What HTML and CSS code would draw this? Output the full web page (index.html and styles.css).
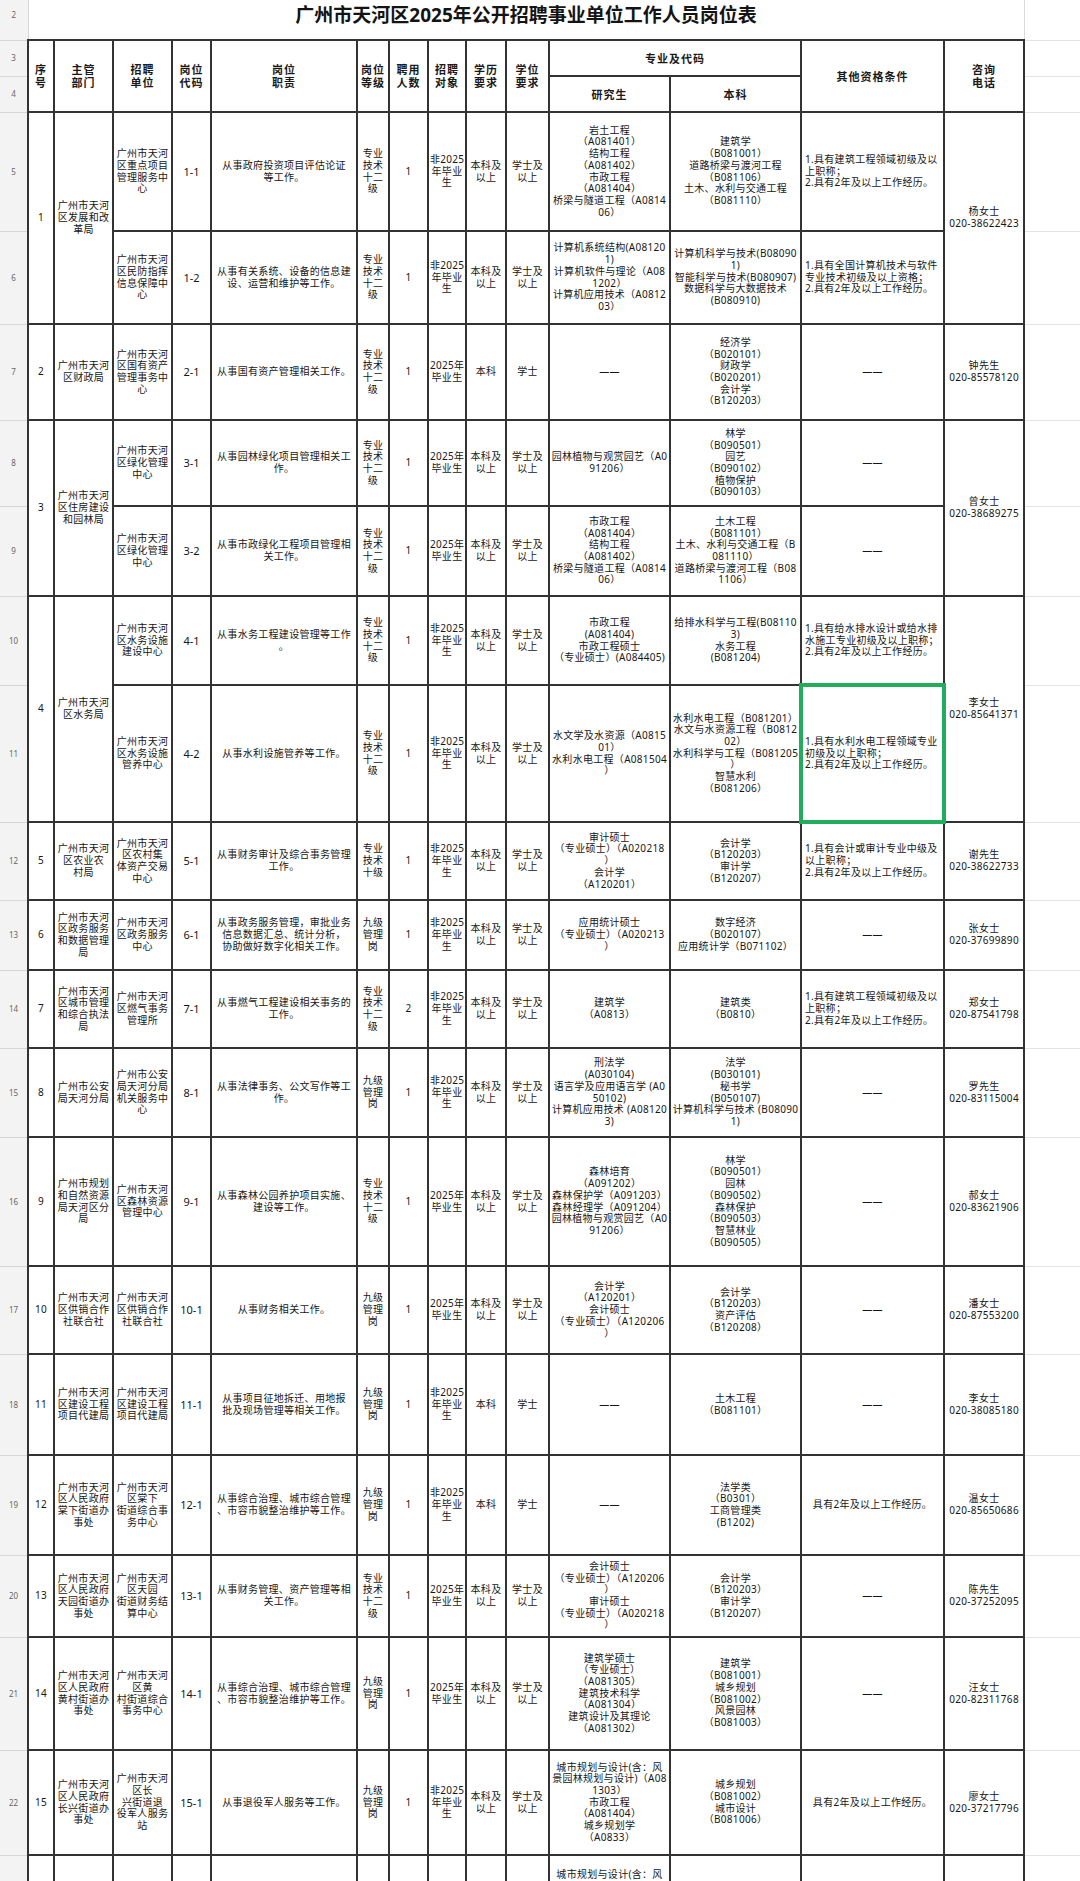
FILE: index.html
```html
<!DOCTYPE html>
<html lang="zh-CN">
<head>
<meta charset="utf-8">
<title>广州市天河区2025年公开招聘事业单位工作人员岗位表</title>
<link rel="stylesheet" href="styles.css">
</head>
<body>
<div class="page">
<table class="sheet">
<colgroup>
<col class="c-gut"><col class="c-no"><col class="c-dept"><col class="c-unit"><col class="c-code"><col class="c-duty"><col class="c-level"><col class="c-num"><col class="c-target"><col class="c-edu"><col class="c-deg"><col class="c-grad"><col class="c-ug"><col class="c-other"><col class="c-tel"><col class="c-blank">
</colgroup>
<tbody>
<tr class="r2"><td class="g g2">2</td><td class="title" colspan="14">广州市天河区2025年公开招聘事业单位工作人员岗位表</td><td class="x"></td></tr>

<tr class="r3"><td class="g">3</td>
<td class="h" rowspan="2">序<br>号</td>
<td class="h" rowspan="2">主管<br>部门</td>
<td class="h" rowspan="2">招聘<br>单位</td>
<td class="h" rowspan="2">岗位<br>代码</td>
<td class="h" rowspan="2">岗位<br>职责</td>
<td class="h" rowspan="2">岗位<br>等级</td>
<td class="h" rowspan="2">聘用<br>人数</td>
<td class="h" rowspan="2">招聘<br>对象</td>
<td class="h" rowspan="2">学历<br>要求</td>
<td class="h" rowspan="2">学位<br>要求</td>
<td class="h" colspan="2">专业及代码</td>
<td class="h" rowspan="2">其他资格条件</td>
<td class="h" rowspan="2">咨询<br>电话</td>
<td class="x"></td></tr>
<tr class="r4"><td class="g">4</td><td class="h">研究生</td><td class="h">本科</td><td class="x"></td></tr>

<tr class="r5"><td class="g">5</td>
<td class="no" rowspan="2">1</td>
<td rowspan="2">广州市天河<br>区发展和改<br>革局</td>
<td>广州市天河<br>区重点项目<br>管理服务中<br>心</td>
<td class="code">1-1</td>
<td>从事政府投资项目评估论证<br>等工作。</td>
<td>专业<br>技术<br>十二<br>级</td>
<td>1</td>
<td>非2025<br>年毕业<br>生</td>
<td>本科及<br>以上</td>
<td>学士及<br>以上</td>
<td>岩土工程<br>（A081401）<br>结构工程<br>（A081402）<br>市政工程<br>（A081404）<br>桥梁与隧道工程（A0814<br>06）</td>
<td>建筑学<br>（B081001）<br>道路桥梁与渡河工程<br>（B081106）<br>土木、水利与交通工程<br>（B081110）</td>
<td class="l">1.具有建筑工程领域初级及以<br>上职称；<br>2.具有2年及以上工作经历。</td>
<td rowspan="2">杨女士<br>020-38622423</td>
<td class="x"></td></tr>

<tr class="r6"><td class="g">6</td>
<td>广州市天河<br>区民防指挥<br>信息保障中<br>心</td>
<td class="code">1-2</td>
<td>从事有关系统、设备的信息建<br>设、运营和维护等工作。</td>
<td>专业<br>技术<br>十二<br>级</td>
<td>1</td>
<td>非2025<br>年毕业<br>生</td>
<td>本科及<br>以上</td>
<td>学士及<br>以上</td>
<td>计算机系统结构(A08120<br>1)<br>计算机软件与理论（A08<br>1202）<br>计算机应用技术（A0812<br>03）</td>
<td>计算机科学与技术(B08090<br>1)<br>智能科学与技术(B080907)<br>数据科学与大数据技术<br>(B080910)</td>
<td class="l">1.具有全国计算机技术与软件<br>专业技术初级及以上资格；<br>2.具有2年及以上工作经历。</td>
<td class="x"></td></tr>

<tr class="r7"><td class="g">7</td>
<td class="no">2</td>
<td>广州市天河<br>区财政局</td>
<td>广州市天河<br>区国有资产<br>管理事务中<br>心</td>
<td class="code">2-1</td>
<td>从事国有资产管理相关工作。</td>
<td>专业<br>技术<br>十二<br>级</td>
<td>1</td>
<td>2025年<br>毕业生</td>
<td>本科</td>
<td>学士</td>
<td>——</td>
<td>经济学<br>（B020101）<br>财政学<br>（B020201）<br>会计学<br>（B120203）</td>
<td>——</td>
<td>钟先生<br>020-85578120</td>
<td class="x"></td></tr>

<tr class="r8"><td class="g">8</td>
<td class="no" rowspan="2">3</td>
<td rowspan="2">广州市天河<br>区住房建设<br>和园林局</td>
<td>广州市天河<br>区绿化管理<br>中心</td>
<td class="code">3-1</td>
<td>从事园林绿化项目管理相关工<br>作。</td>
<td>专业<br>技术<br>十二<br>级</td>
<td>1</td>
<td>2025年<br>毕业生</td>
<td>本科及<br>以上</td>
<td>学士及<br>以上</td>
<td>园林植物与观赏园艺（A0<br>91206）</td>
<td>林学<br>（B090501）<br>园艺<br>（B090102）<br>植物保护<br>（B090103）</td>
<td>——</td>
<td rowspan="2">曾女士<br>020-38689275</td>
<td class="x"></td></tr>

<tr class="r9"><td class="g">9</td>
<td>广州市天河<br>区绿化管理<br>中心</td>
<td class="code">3-2</td>
<td>从事市政绿化工程项目管理相<br>关工作。</td>
<td>专业<br>技术<br>十二<br>级</td>
<td>1</td>
<td>2025年<br>毕业生</td>
<td>本科及<br>以上</td>
<td>学士及<br>以上</td>
<td>市政工程<br>（A081404）<br>结构工程<br>（A081402）<br>桥梁与隧道工程（A0814<br>06）</td>
<td>土木工程<br>（B081101）<br>土木、水利与交通工程（B<br>081110）<br>道路桥梁与渡河工程（B08<br>1106）</td>
<td>——</td>
<td class="x"></td></tr>

<tr class="r10"><td class="g">10</td>
<td class="no" rowspan="2">4</td>
<td rowspan="2">广州市天河<br>区水务局</td>
<td>广州市天河<br>区水务设施<br>建设中心</td>
<td class="code">4-1</td>
<td>从事水务工程建设管理等工作<br>。</td>
<td>专业<br>技术<br>十二<br>级</td>
<td>1</td>
<td>非2025<br>年毕业<br>生</td>
<td>本科及<br>以上</td>
<td>学士及<br>以上</td>
<td>市政工程<br>(A081404)<br>市政工程硕士<br>（专业硕士）(A084405)</td>
<td>给排水科学与工程(B08110<br>3)<br>水务工程<br>(B081204)</td>
<td class="l">1.具有给水排水设计或给水排<br>水施工专业初级及以上职称；<br>2.具有2年及以上工作经历。</td>
<td rowspan="2">李女士<br>020-85641371</td>
<td class="x"></td></tr>

<tr class="r11"><td class="g">11</td>
<td>广州市天河<br>区水务设施<br>管养中心</td>
<td class="code">4-2</td>
<td>从事水利设施管养等工作。</td>
<td>专业<br>技术<br>十二<br>级</td>
<td>1</td>
<td>非2025<br>年毕业<br>生</td>
<td>本科及<br>以上</td>
<td>学士及<br>以上</td>
<td>水文学及水资源（A0815<br>01）<br>水利水电工程（A081504<br>）</td>
<td>水利水电工程（B081201）<br>水文与水资源工程（B0812<br>02）<br>水利科学与工程（B081205<br>）<br>智慧水利<br>（B081206）</td>
<td class="l sel">1.具有水利水电工程领域专业<br>初级及以上职称；<br>2.具有2年及以上工作经历。</td>
<td class="x"></td></tr>

<tr class="r12"><td class="g">12</td>
<td class="no">5</td>
<td>广州市天河<br>区农业农<br>村局</td>
<td>广州市天河<br>区农村集<br>体资产交易<br>中心</td>
<td class="code">5-1</td>
<td>从事财务审计及综合事务管理<br>工作。</td>
<td>专业<br>技术<br>十级</td>
<td>1</td>
<td>非2025<br>年毕业<br>生</td>
<td>本科及<br>以上</td>
<td>学士及<br>以上</td>
<td>审计硕士<br>（专业硕士）（A020218<br>）<br>会计学<br>（A120201）</td>
<td>会计学<br>（B120203）<br>审计学<br>（B120207）</td>
<td class="l">1.具有会计或审计专业中级及<br>以上职称；<br>2.具有2年及以上工作经历。</td>
<td>谢先生<br>020-38622733</td>
<td class="x"></td></tr>

<tr class="r13"><td class="g">13</td>
<td class="no">6</td>
<td>广州市天河<br>区政务服务<br>和数据管理<br>局</td>
<td>广州市天河<br>区政务服务<br>中心</td>
<td class="code">6-1</td>
<td>从事政务服务管理，审批业务<br>信息数据汇总、统计分析，<br>协助做好数字化相关工作。</td>
<td>九级<br>管理<br>岗</td>
<td>1</td>
<td>非2025<br>年毕业<br>生</td>
<td>本科及<br>以上</td>
<td>学士及<br>以上</td>
<td>应用统计硕士<br>（专业硕士）（A020213<br>）</td>
<td>数字经济<br>（B020107）<br>应用统计学（B071102）</td>
<td>——</td>
<td>张女士<br>020-37699890</td>
<td class="x"></td></tr>

<tr class="r14"><td class="g">14</td>
<td class="no">7</td>
<td>广州市天河<br>区城市管理<br>和综合执法<br>局</td>
<td>广州市天河<br>区燃气事务<br>管理所</td>
<td class="code">7-1</td>
<td>从事燃气工程建设相关事务的<br>工作。</td>
<td>专业<br>技术<br>十二<br>级</td>
<td>2</td>
<td>非2025<br>年毕业<br>生</td>
<td>本科及<br>以上</td>
<td>学士及<br>以上</td>
<td>建筑学<br>（A0813）</td>
<td>建筑类<br>（B0810）</td>
<td class="l">1.具有建筑工程领域初级及以<br>上职称；<br>2.具有2年及以上工作经历。</td>
<td>郑女士<br>020-87541798</td>
<td class="x"></td></tr>

<tr class="r15"><td class="g">15</td>
<td class="no">8</td>
<td>广州市公安<br>局天河分局</td>
<td>广州市公安<br>局天河分局<br>机关服务中<br>心</td>
<td class="code">8-1</td>
<td>从事法律事务、公文写作等工<br>作。</td>
<td>九级<br>管理<br>岗</td>
<td>1</td>
<td>非2025<br>年毕业<br>生</td>
<td>本科及<br>以上</td>
<td>学士及<br>以上</td>
<td>刑法学<br>(A030104)<br>语言学及应用语言学 (A0<br>50102)<br>计算机应用技术 (A08120<br>3)</td>
<td>法学<br>(B030101)<br>秘书学<br>(B050107)<br>计算机科学与技术 (B08090<br>1)</td>
<td>——</td>
<td>罗先生<br>020-83115004</td>
<td class="x"></td></tr>

<tr class="r16"><td class="g">16</td>
<td class="no">9</td>
<td>广州市规划<br>和自然资源<br>局天河区分<br>局</td>
<td>广州市天河<br>区森林资源<br>管理中心</td>
<td class="code">9-1</td>
<td>从事森林公园养护项目实施、<br>建设等工作。</td>
<td>专业<br>技术<br>十二<br>级</td>
<td>1</td>
<td>2025年<br>毕业生</td>
<td>本科及<br>以上</td>
<td>学士及<br>以上</td>
<td>森林培育<br>（A091202）<br>森林保护学（A091203）<br>森林经理学（A091204）<br>园林植物与观赏园艺（A0<br>91206）</td>
<td>林学<br>（B090501）<br>园林<br>（B090502）<br>森林保护<br>（B090503）<br>智慧林业<br>（B090505）</td>
<td>——</td>
<td>郝女士<br>020-83621906</td>
<td class="x"></td></tr>

<tr class="r17"><td class="g">17</td>
<td class="no">10</td>
<td>广州市天河<br>区供销合作<br>社联合社</td>
<td>广州市天河<br>区供销合作<br>社联合社</td>
<td class="code">10-1</td>
<td>从事财务相关工作。</td>
<td>九级<br>管理<br>岗</td>
<td>1</td>
<td>2025年<br>毕业生</td>
<td>本科及<br>以上</td>
<td>学士及<br>以上</td>
<td>会计学<br>（A120201）<br>会计硕士<br>（专业硕士）（A120206<br>）</td>
<td>会计学<br>（B120203）<br>资产评估<br>（B120208）</td>
<td>——</td>
<td>潘女士<br>020-87553200</td>
<td class="x"></td></tr>

<tr class="r18"><td class="g">18</td>
<td class="no">11</td>
<td>广州市天河<br>区建设工程<br>项目代建局</td>
<td>广州市天河<br>区建设工程<br>项目代建局</td>
<td class="code">11-1</td>
<td>从事项目征地拆迁、用地报<br>批及现场管理等相关工作。</td>
<td>九级<br>管理<br>岗</td>
<td>1</td>
<td>非2025<br>年毕业<br>生</td>
<td>本科</td>
<td>学士</td>
<td>——</td>
<td>土木工程<br>（B081101）</td>
<td>——</td>
<td>李女士<br>020-38085180</td>
<td class="x"></td></tr>

<tr class="r19"><td class="g">19</td>
<td class="no">12</td>
<td>广州市天河<br>区人民政府<br>棠下街道办<br>事处</td>
<td>广州市天河<br>区棠下<br>街道综合事<br>务中心</td>
<td class="code">12-1</td>
<td>从事综合治理、城市综合管理<br>、市容市貌整治维护等工作。</td>
<td>九级<br>管理<br>岗</td>
<td>1</td>
<td>非2025<br>年毕业<br>生</td>
<td>本科</td>
<td>学士</td>
<td>——</td>
<td>法学类<br>（B0301）<br>工商管理类<br>(B1202)</td>
<td>具有2年及以上工作经历。</td>
<td>温女士<br>020-85650686</td>
<td class="x"></td></tr>

<tr class="r20"><td class="g">20</td>
<td class="no">13</td>
<td>广州市天河<br>区人民政府<br>天园街道办<br>事处</td>
<td>广州市天河<br>区天园<br>街道财务结<br>算中心</td>
<td class="code">13-1</td>
<td>从事财务管理、资产管理等相<br>关工作。</td>
<td>专业<br>技术<br>十二<br>级</td>
<td>1</td>
<td>2025年<br>毕业生</td>
<td>本科及<br>以上</td>
<td>学士及<br>以上</td>
<td>会计硕士<br>（专业硕士）（A120206<br>）<br>审计硕士<br>（专业硕士）（A020218<br>）</td>
<td>会计学<br>（B120203）<br>审计学<br>（B120207）</td>
<td>——</td>
<td>陈先生<br>020-37252095</td>
<td class="x"></td></tr>

<tr class="r21"><td class="g">21</td>
<td class="no">14</td>
<td>广州市天河<br>区人民政府<br>黄村街道办<br>事处</td>
<td>广州市天河<br>区黄<br>村街道综合<br>事务中心</td>
<td class="code">14-1</td>
<td>从事综合治理、城市综合管理<br>、市容市貌整治维护等工作。</td>
<td>九级<br>管理<br>岗</td>
<td>1</td>
<td>2025年<br>毕业生</td>
<td>本科及<br>以上</td>
<td>学士及<br>以上</td>
<td>建筑学硕士<br>（专业硕士）<br>（A081305）<br>建筑技术科学<br>（A081304）<br>建筑设计及其理论<br>（A081302）</td>
<td>建筑学<br>（B081001）<br>城乡规划<br>（B081002）<br>风景园林<br>（B081003）</td>
<td>——</td>
<td>汪女士<br>020-82311768</td>
<td class="x"></td></tr>

<tr class="r22"><td class="g">22</td>
<td class="no">15</td>
<td>广州市天河<br>区人民政府<br>长兴街道办<br>事处</td>
<td>广州市天河<br>区长<br>兴街道退<br>役军人服务<br>站</td>
<td class="code">15-1</td>
<td>从事退役军人服务等工作。</td>
<td>九级<br>管理<br>岗</td>
<td>1</td>
<td>非2025<br>年毕业<br>生</td>
<td>本科及<br>以上</td>
<td>学士及<br>以上</td>
<td>城市规划与设计(含：风<br>景园林规划与设计)（A08<br>1303）<br>市政工程<br>（A081404）<br>城乡规划学<br>（A0833）</td>
<td>城乡规划<br>（B081002）<br>城市设计<br>（B081006）</td>
<td>具有2年及以上工作经历。</td>
<td>廖女士<br>020-37217796</td>
<td class="x"></td></tr>

<tr class="r23"><td class="g">23</td>
<td></td><td></td><td></td><td></td><td></td><td></td><td></td><td></td><td></td><td></td>
<td>城市规划与设计(含：风<br>景园林规划与设计)（A08<br>1303）<br>市政工程<br>（A081404）<br>城乡规划学<br>（A0833）</td>
<td></td><td></td><td></td>
<td class="x"></td></tr>
</tbody>
</table>
</div>
</body>
</html>
```

FILE: styles.css
```css
* {
  box-sizing: border-box;
}

html,
body {
  margin: 0;
  padding: 0;
  background: #ffffff;
}

.page {
  width: 1080px;
  height: 1881px;
  overflow: hidden;
}

.sheet {
  width: 1080px;
  table-layout: fixed;
  border-collapse: collapse;
  font-family: "Noto Sans", "Noto Sans CJK SC", sans-serif;
  font-size: 10px;
  line-height: 11.7px;
  letter-spacing: 0.3px;
  color: #161616;
}

.c-gut { width: 28px; }
.c-no { width: 26px; }
.c-dept { width: 59px; }
.c-unit { width: 59px; }
.c-code { width: 39px; }
.c-duty { width: 146px; }
.c-level { width: 32px; }
.c-num { width: 39px; }
.c-target { width: 38px; }
.c-edu { width: 40px; }
.c-deg { width: 43px; }
.c-grad { width: 121px; }
.c-ug { width: 131px; }
.c-other { width: 143px; }
.c-tel { width: 80px; }
.c-blank { width: 56px; }

.sheet td {
  padding: 0 1px;
  text-align: center;
  vertical-align: middle;
  white-space: nowrap;
  border: 2px solid #333333;
}

.sheet td.g {
  padding: 0;
  border: none;
  border-bottom: 1px solid #d6d6d6;
  background: #f3f3f3;
  color: #666666;
  font-size: 8px;
  letter-spacing: 0;
}

.sheet td.g2 {
  padding-bottom: 10px;
}

.sheet td.x {
  border: none;
  border-bottom: 1px solid #e4e4e4;
}

.sheet td.title {
  border: none;
  border-left: 1px solid #d6d6d6;
  border-right: 1px solid #dadada;
  border-bottom: 2px solid #333333;
  padding-bottom: 10px;
  font-size: 19px;
  line-height: 24px;
  font-weight: 700;
  letter-spacing: 0;
  color: #141414;
}

.sheet td.h {
  font-size: 11px;
  line-height: 13px;
  font-weight: 700;
  letter-spacing: 1px;
  color: #1a1a1a;
}

.sheet td.code {
  font-size: 11px;
  letter-spacing: 0;
}

.sheet td.l {
  text-align: left;
  padding-left: 3px;
}

.sheet td.sel {
  outline: 4px solid #22ad5c;
  outline-offset: -2px;
}

.r2 { height: 40px; }
.r3 { height: 36px; }
.r4 { height: 36px; }
.r5 { height: 119px; }
.r6 { height: 93px; }
.r7 { height: 96px; }
.r8 { height: 86px; }
.r9 { height: 90px; }
.r10 { height: 89px; }
.r11 { height: 137px; }
.r12 { height: 78px; }
.r13 { height: 70px; }
.r14 { height: 78px; }
.r15 { height: 89px; }
.r16 { height: 129px; }
.r17 { height: 88px; }
.r18 { height: 101px; }
.r19 { height: 100px; }
.r20 { height: 82px; }
.r21 { height: 113px; }
.r22 { height: 105px; }
.r23 { height: 110px; }
```
